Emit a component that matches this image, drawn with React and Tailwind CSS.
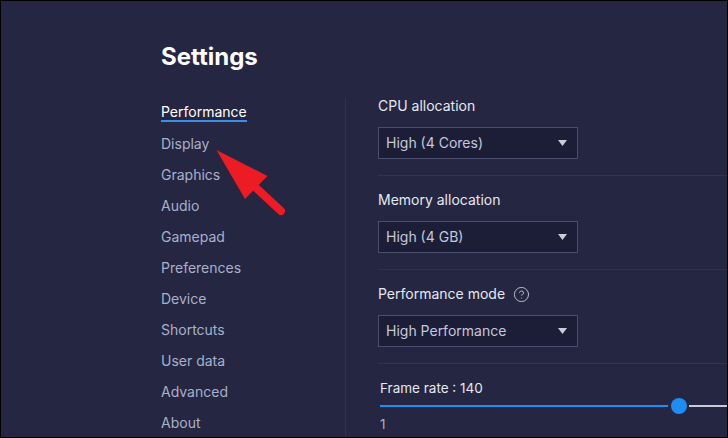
import React from "react";

const navItems = [
  "Performance",
  "Display",
  "Graphics",
  "Audio",
  "Gamepad",
  "Preferences",
  "Device",
  "Shortcuts",
  "User data",
  "Advanced",
  "About",
];

function Caret() {
  return (
    <svg width="9" height="6" viewBox="0 0 9 6" className="shrink-0">
      <polygon points="0,0 9,0 4.5,6" fill="#c9cddb" />
    </svg>
  );
}

function Select({ value }) {
  return (
    <div className="mt-[11px] flex h-[32px] w-[200px] items-center justify-between border border-[#4a4e6c] bg-[#1c1e38] pl-[7px] pr-[10px]">
      <span className="text-[14px] leading-[20px] text-[#c4c8d8]">{value}</span>
      <Caret />
    </div>
  );
}

function HelpIcon() {
  return (
    <svg width="17" height="17" viewBox="0 0 24 24" fill="none" stroke="#c4c7d4" strokeWidth="1.3" strokeLinecap="round" strokeLinejoin="round">
      <circle cx="12" cy="12" r="10" />
      <path d="M9.09 9a3 3 0 0 1 5.83 1c0 2-3 3-3 3" />
      <path d="M12 17h.01" />
    </svg>
  );
}

function Section({ label, value, help, first }) {
  return (
    <div className={`border-b border-[#30334f] pb-[16px] ${first ? "" : "pt-[14px]"}`}>
      <div className="flex h-[20px] items-center gap-[8px]">
        <span className="text-[14px] leading-[20px] text-[#e6e8f0]">{label}</span>
        {help && <HelpIcon />}
      </div>
      <Select value={value} />
    </div>
  );
}

export default function App() {
  return (
    <div className="relative h-[438px] w-[728px] overflow-hidden border border-black bg-[#242642] font-['Inter','Noto_Sans',sans-serif]">
      <div className="flex h-full pl-[160px]">
        <div className="flex w-[184px] shrink-0 flex-col pt-[40px]">
          <h1 className="text-[24px] font-bold leading-[32px] text-white">Settings</h1>
          <nav className="mt-[30px] flex flex-col">
            {navItems.map((item, i) => (
              <div key={item} className="h-[31px]">
                {i === 0 ? (
                  <span className="block w-fit border-b-2 border-[#3a8ee6] text-[14px] leading-[17px] text-white">
                    {item}
                  </span>
                ) : (
                  <span className="block text-[14px] leading-[20px] text-[#a9b1c9]">{item}</span>
                )}
              </div>
            ))}
          </nav>
        </div>
        <div className="mt-[97px] w-px shrink-0 bg-[#2f3251]" />
        <div className="min-w-0 flex-1 pl-[32px] pt-[95px]">
          <Section label="CPU allocation" value="High (4 Cores)" first />
          <Section label="Memory allocation" value="High (4 GB)" />
          <Section label="Performance mode" value="High Performance" help />
          <div className="pt-[14px] pl-[2px]">
            <div className="text-[13.5px] leading-[20px] text-[#e6e8f0]">Frame rate : 140</div>
            <div className="flex h-[16px] items-center">
              <div className="h-[2px] w-[288px] bg-[#1e8df2]" />
              <div className="ml-[3px] h-[16px] w-[16px] shrink-0 rounded-full bg-[#1e8df2]" />
              <div className="ml-[2px] h-[2px] flex-1 bg-[#c9cad6]" />
            </div>
            <div className="text-[13.5px] leading-[20px] text-[#a9b0c6]">1</div>
          </div>
        </div>
      </div>
      <svg
        className="pointer-events-none absolute left-[-1px] top-[-1px]"
        width="728"
        height="438"
        viewBox="0 0 728 438"
      >
        <polygon points="216.5,150 267.5,176 245,199" fill="#ed1c24" />
        <line x1="254" y1="186" x2="281" y2="211" stroke="#ed1c24" strokeWidth="8" strokeLinecap="round" />
      </svg>
    </div>
  );
}
